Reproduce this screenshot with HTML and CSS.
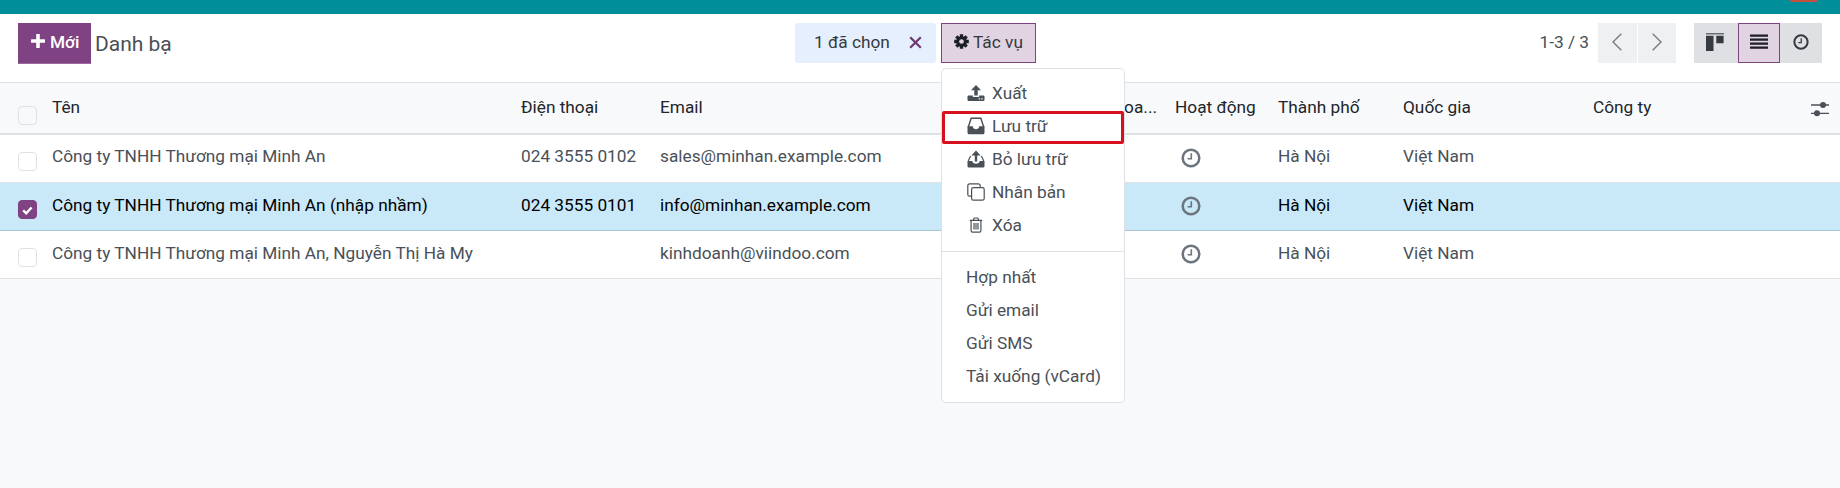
FILE: index.html
```html
<!DOCTYPE html>
<html lang="vi">
<head>
    <meta charset="UTF-8">
    <meta name="viewport" content="width=device-width, initial-scale=1.0">
    <title>Danh bạ</title>
    <link rel="stylesheet" href="styles.css">
</head>
<body>
    <!-- icons used more than once -->
    <svg class="sprite">
      <symbol id="clock" viewBox="0 0 20 20">
        <circle cx="10" cy="10" r="8.3" fill="none" stroke="currentColor" stroke-width="2.5"/>
        <path d="M10.3 5.2v5.6H6.6" fill="none" stroke="currentColor" stroke-width="1.6"/>
      </symbol>
    </svg>

    <div class="navbar"><span class="badge"></span></div>

    <div class="control-panel">
      <div class="left">
        <button class="btn-new">
          <svg width="14" height="14" viewBox="0 0 14 14"><path d="M7 1v12M1 7h12" stroke="#fff" stroke-width="3.6" stroke-linecap="round"/></svg>
          <span>Mới</span>
        </button>
        <span class="title">Danh bạ</span>
      </div>
      <div class="selection">
        <span>1 đã chọn</span>
        <svg width="13" height="13" viewBox="0 0 13 13"><path d="M1.2 1.2l10.6 10.6M11.8 1.2L1.2 11.8" stroke="#6b3b70" stroke-width="2.3"/></svg>
      </div>
      <div class="actions">
        <button class="btn-action">
          <svg width="15" height="15" viewBox="0 0 16 16">
            <g stroke="#1c1f24" stroke-width="3.6"><path d="M8 .2v15.6M.2 8h15.6M2.5 2.5l11 11M13.5 2.5l-11 11"/></g>
            <circle cx="8" cy="8" r="5.6" fill="#1c1f24"/>
            <circle cx="8" cy="8" r="2.5" fill="#e1d3e2"/>
          </svg>
          <span>Tác vụ</span>
        </button>
        <div class="menu">
          <a class="item">
            <svg width="18" height="17" viewBox="0 0 18 17"><path d="M9 0l5 5.3h-3.3v5.2H7.3V5.3H4z" fill="#495057"/><path d="M1.3 10.5h4.6v1.6h6.2v-1.6h4.6l.8.8v3.9l-.8.8H1.3l-.8-.8v-3.9z" fill="#495057"/><path d="M11.7 13.8h1.4M14.3 13.8h1.4" stroke="#fff" stroke-width="1.2"/></svg>
            <span>Xuất</span>
          </a>
          <a class="item marked">
            <svg width="18" height="18" viewBox="0 0 18 18"><path d="M1.2 10.3L4.2 1.2h9.6l3 9.1" fill="none" stroke="#495057" stroke-width="1.4"/><path d="M.5 9.3h5.2c.3 3.8 6.3 3.8 6.6 0h5.2v7l-.9 1H1.4l-.9-1z" fill="#495057"/></svg>
            <span>Lưu trữ</span>
          </a>
          <a class="item">
            <svg width="18" height="18" viewBox="0 0 18 18"><path d="M9 .5l4.6 5h-3.4v6H7.8v-6H4.4z" fill="#495057"/><path d="M3.6 6L1.2 11M14.4 6l2.4 5" fill="none" stroke="#495057" stroke-width="1.2"/><path d="M.5 11h4.8c.3 3.6 7.1 3.6 7.4 0h4.8v5.4l-.9 1H1.4l-.9-1z" fill="#495057"/></svg>
            <span>Bỏ lưu trữ</span>
          </a>
          <a class="item">
            <svg width="18" height="18" viewBox="0 0 18 18" fill="none" stroke="#495057" stroke-width="1.2"><rect x="4.6" y="4.6" width="12.6" height="12.6" rx="1.8"/><path d="M4.6 13.2H2.6a1.8 1.8 0 0 1-1.8-1.8V2.6A1.8 1.8 0 0 1 2.6.8h8.8a1.8 1.8 0 0 1 1.8 1.8v2"/></svg>
            <span>Nhân bản</span>
          </a>
          <a class="item">
            <svg width="18" height="16" viewBox="0 0 18 16" fill="none" stroke="#495057" stroke-width="1.2"><path d="M2.8 3.4h12.4M6.3 3.2L7.2 1h3.6l.9 2.2M4.1 3.4v10c0 1 .5 1.7 1.4 1.7h7c.9 0 1.4-.7 1.4-1.7v-10M7 6v6.4M9 6v6.4M11 6v6.4"/></svg>
            <span>Xóa</span>
          </a>
          <div class="divider"></div>
          <a class="item">Hợp nhất</a>
          <a class="item">Gửi email</a>
          <a class="item">Gửi SMS</a>
          <a class="item">Tải xuống (vCard)</a>
        </div>
      </div>
      <div class="right">
        <span class="pager">1-3 / 3</span>
        <div class="pager-buttons">
          <button><svg width="10" height="18" viewBox="0 0 10 18"><path d="M9.3.8L1 9l8.3 8.2" fill="none" stroke="#777c81" stroke-width="1.4"/></svg></button>
          <button><svg width="10" height="18" viewBox="0 0 10 18"><path d="M.7.8L9 9 .7 17.2" fill="none" stroke="#777c81" stroke-width="1.4"/></svg></button>
        </div>
        <div class="views">
          <button><svg width="18" height="18" viewBox="0 0 18 18"><path d="M0 0h18v1.5H0z" fill="#6a6e73"/><path d="M0 2.8h7.5V18H0zM10.3 2.8H17.6v7.4H10.3z" fill="#343a40"/></svg></button>
          <button class="active"><svg width="18" height="16" viewBox="0 0 18 16"><path d="M0 1.7h18M0 5.7h18M0 9.7h18M0 13.7h18" stroke="#1c1f24" stroke-width="2.3"/></svg></button>
          <button><svg width="16" height="16"><use href="#clock"/></svg></button>
        </div>
      </div>
    </div>

    <table class="list">
      <colgroup>
        <col class="c-check"><col class="c-name"><col class="c-phone"><col class="c-email"><col class="c-sales"><col class="c-activity"><col class="c-city"><col class="c-country"><col class="c-company"><col class="c-options">
      </colgroup>
      <thead>
        <tr>
          <th><span class="check"></span></th>
          <th>Tên</th>
          <th>Điện thoại</th>
          <th>Email</th>
          <th class="sales">doa...</th>
          <th>Hoạt động</th>
          <th>Thành phố</th>
          <th>Quốc gia</th>
          <th>Công ty</th>
          <th><svg class="options" width="18" height="16" viewBox="0 0 18 16"><path d="M0 4h18M0 12.3h18" stroke="#495057" stroke-width="1.3"/><circle cx="12" cy="4" r="3" fill="#495057"/><circle cx="6" cy="12.3" r="3" fill="#495057"/></svg></th>
        </tr>
      </thead>
      <tbody>
        <tr>
          <td><span class="check"></span></td>
          <td>Công ty TNHH Thương mại Minh An</td>
          <td>024 3555 0102</td>
          <td>sales@minhan.example.com</td>
          <td></td>
          <td><svg class="clock" width="20" height="20"><use href="#clock"/></svg></td>
          <td>Hà Nội</td>
          <td>Việt Nam</td>
          <td></td>
          <td></td>
        </tr>
        <tr class="selected">
          <td><span class="check checked"><svg width="11" height="9" viewBox="0 0 11 9"><path d="M1.2 4.4l3 2.9 5.4-5.8" fill="none" stroke="#fff" stroke-width="2.4"/></svg></span></td>
          <td>Công ty TNHH Thương mại Minh An (nhập nhầm)</td>
          <td>024 3555 0101</td>
          <td>info@minhan.example.com</td>
          <td></td>
          <td><svg class="clock" width="20" height="20"><use href="#clock"/></svg></td>
          <td>Hà Nội</td>
          <td>Việt Nam</td>
          <td></td>
          <td></td>
        </tr>
        <tr>
          <td><span class="check"></span></td>
          <td>Công ty TNHH Thương mại Minh An, Nguyễn Thị Hà My</td>
          <td></td>
          <td>kinhdoanh@viindoo.com</td>
          <td></td>
          <td><svg class="clock" width="20" height="20"><use href="#clock"/></svg></td>
          <td>Hà Nội</td>
          <td>Việt Nam</td>
          <td></td>
          <td></td>
        </tr>
      </tbody>
    </table>
</body>
</html>
```
FILE: styles.css
```css
*, *::after{
  box-sizing: border-box;
}
body{
  margin: 0;
  min-height: 100vh;
  background-color: #f8f9fa;
  color: #495057;
  font-family: Roboto, "Noto Sans", sans-serif;
  font-size: 17.25px;
  line-height: 24px;
}
button{
  font: inherit;
  border: none;
  padding: 0;
}
svg{
  display: block;
  flex: none;
}
.sprite{
  position: absolute;
  width: 0;
  height: 0;
}
.navbar{
  height: 14px;
  padding-right: 22px;
  background-color: #008e9b;
}
.badge{
  display: block;
  width: 28px;
  height: 2px;
  margin-left: auto;
  background-color: #c4513f;
  border-radius: 0 0 6px 6px;
}

/* control panel */
.control-panel{
  display: flex;
  height: 69px;
  padding: 9px 18px 0;
  background-color: #fff;
  border-bottom: 1px solid #dee2e6;
}
.left{
  display: flex;
  width: 777px;
}
.btn-new{
  display: flex;
  gap: 5px;
  width: 73px;
  height: 41px;
  padding: 7px 0 0 13px;
  background-color: #7f4282;
  border-bottom: 1px solid #9a6a9c;
  color: #fff;
  font-weight: 500;
}
.btn-new svg{
  margin-top: 4px;
}
.title{
  margin-left: 4px;
  padding-top: 9px;
  font-size: 21px;
}
.selection{
  display: flex;
  gap: 19px;
  width: 141px;
  height: 40px;
  padding: 7px 0 0 19px;
  background-color: #e6effe;
  border-radius: 3px;
  color: #343a40;
}
.selection svg{
  margin-top: 6px;
}
.actions{
  position: relative;
  margin-left: 5px;
}
.btn-action{
  display: flex;
  gap: 4px;
  width: 95px;
  height: 40px;
  padding: 6px 0 0 12px;
  background-color: #e1d3e2;
  border: 1px solid #7f4282;
  color: #343a40;
}
.btn-action svg{
  margin-top: 4px;
}
.right{
  display: flex;
  margin-left: auto;
}
.pager{
  padding: 7px 9px 0 0;
}
.pager-buttons{
  display: flex;
  gap: 1px;
  margin-right: 18px;
}
.pager-buttons button{
  display: flex;
  justify-content: center;
  width: 38.5px;
  height: 40px;
  padding-top: 10px;
  background-color: #eff0f2;
}
.views{
  display: flex;
}
.views button{
  display: flex;
  justify-content: center;
  width: 42px;
  height: 40px;
  padding-top: 11px;
  background-color: #dee0e4;
  color: #343a40;
}
.views button:first-child{
  width: 44px;
  padding: 10px 2px 0 0;
}
.views .active{
  padding-top: 10px;
  background-color: #e1d3e2;
  border: 1px solid #7f4282;
}

/* action menu */
.menu{
  position: absolute;
  top: 45px;
  left: 0;
  z-index: 1;
  width: 184px;
  height: 335px;
  padding: 8px 0;
  background-color: #fff;
  border: 1px solid #dee2e6;
  border-radius: 5px;
}
.item{
  position: relative;
  display: flex;
  align-items: center;
  gap: 7px;
  height: 32.8px;
  padding: 0 0 0 24px;
  white-space: nowrap;
}
.item svg{
  margin-left: 1px;
}
.marked::after{
  content: "";
  position: absolute;
  top: 1px;
  left: 0;
  width: 182px;
  height: 33px;
  border: 3px solid #d8101e;
  border-radius: 2px;
}
.divider{
  height: 1px;
  margin: 10px 0 9px;
  background-color: #dee2e6;
}

/* list */
.list{
  width: 1840px;
  table-layout: fixed;
  border-collapse: separate;
  border-spacing: 0;
  background-color: #fff;
}
.c-check{ width: 46px; }
.c-name{ width: 469px; }
.c-phone{ width: 139px; }
.c-email{ width: 290px; }
.c-sales{ width: 225px; }
.c-activity{ width: 103px; }
.c-city{ width: 125px; }
.c-country{ width: 190px; }
.c-company{ width: 214px; }
.c-options{ width: 39px; }
th, td{
  padding: 9px 0 0 6px;
  text-align: left;
  vertical-align: top;
  white-space: nowrap;
}
th{
  height: 52px;
  padding-top: 12px;
  background-color: #f8f9fb;
  border-bottom: 2px solid #dee2e6;
  color: #212529;
  font-weight: 400;
}
td{
  height: 48px;
  border-bottom: 1px solid #dee2e6;
}
tr + tr td{
  padding-top: 10px;
}
th:first-child, td:first-child{
  padding-left: 18px;
}
.sales{
  padding-right: 12px;
  text-align: right;
}
.check{
  display: block;
  width: 19px;
  height: 19px;
  margin-top: 8px;
  border: 1px solid #dee2e6;
  border-radius: 4px;
}
th .check{
  margin-top: 11px;
}
.checked{
  padding: 5px 0 0 3px;
  background-color: #7f4282;
  border-color: #7f4282;
}
.clock{
  margin: 4px 0 0 6px;
  color: #6c757d;
}
tr + tr .clock{
  margin-top: 3px;
}
tr + tr .check{
  margin-top: 7px;
}
.options{
  margin: 6px 0 0 4px;
}
.selected td{
  background-color: #c9e8f8;
  border-bottom-color: #a9c3d0;
  color: #000;
}
```
